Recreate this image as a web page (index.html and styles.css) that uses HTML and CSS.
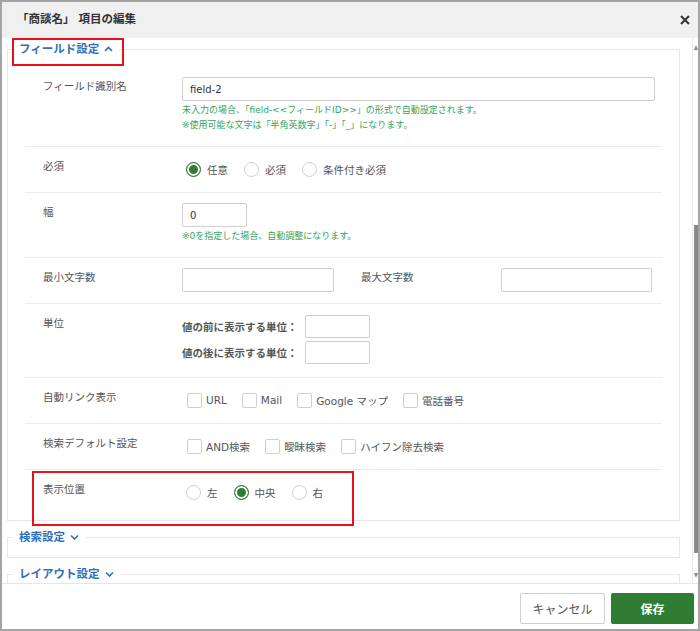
FILE: index.html
```html
<!DOCTYPE html>
<html lang="ja">
<head>
    <meta charset="UTF-8">
    <meta name="viewport" content="width=device-width, initial-scale=1.0">
    <title>項目の編集</title>
    <link rel="stylesheet" href="styles.css">
</head>
<body>
    <div class="dialog">
        <div class="dialog-header">
            <span class="dialog-title">「商談名」 項目の編集</span>
            <button class="close" type="button">
                <svg width="10" height="10" viewBox="0 0 10 10"><path d="M1 1 L9 9 M9 1 L1 9" stroke="#333" stroke-width="2" fill="none"/></svg>
            </button>
        </div>

        <div class="dialog-body">
            <div class="body-scroll">
                <fieldset class="section">
                    <legend class="section-title annot">フィールド設定<svg class="chev" width="9" height="6" viewBox="0 0 9 6"><polyline points="1,5 4.5,1.5 8,5" fill="none" stroke="#2f6fba" stroke-width="1.6"/></svg></legend>

                    <div class="row">
                        <div class="row-label">フィールド識別名</div>
                        <div class="row-control">
                            <input class="text-input input-id" type="text" value="field-2">
                            <div class="hints">
                                <p class="hint">未入力の場合、「field-&lt;&lt;フィールドID&gt;&gt;」の形式で自動設定されます。</p>
                                <p class="hint">※使用可能な文字は「半角英数字」「-」「_」になります。</p>
                            </div>
                        </div>
                    </div>

                    <div class="row">
                        <div class="row-label">必須</div>
                        <div class="row-control">
                            <div class="choices radios">
                                <label class="choice"><span class="radio checked"></span>任意</label>
                                <label class="choice"><span class="radio"></span>必須</label>
                                <label class="choice"><span class="radio"></span>条件付き必須</label>
                            </div>
                        </div>
                    </div>

                    <div class="row">
                        <div class="row-label">幅</div>
                        <div class="row-control">
                            <input class="text-input input-width" type="text" value="0">
                            <div class="hints">
                                <p class="hint">※0を指定した場合、自動調整になります。</p>
                            </div>
                        </div>
                    </div>

                    <div class="row">
                        <div class="row-label">最小文字数</div>
                        <div class="row-control inline">
                            <input class="text-input input-len" type="text">
                            <span class="inline-label">最大文字数</span>
                            <input class="text-input input-len2" type="text">
                        </div>
                    </div>

                    <div class="row">
                        <div class="row-label">単位</div>
                        <div class="row-control units">
                            <div class="unit">
                                <span class="unit-label">値の前に表示する単位：</span>
                                <input class="text-input input-unit" type="text">
                            </div>
                            <div class="unit">
                                <span class="unit-label">値の後に表示する単位：</span>
                                <input class="text-input input-unit" type="text">
                            </div>
                        </div>
                    </div>

                    <div class="row">
                        <div class="row-label">自動リンク表示</div>
                        <div class="row-control">
                            <div class="choices checks">
                                <label class="choice"><span class="check"></span>URL</label>
                                <label class="choice"><span class="check"></span>Mail</label>
                                <label class="choice"><span class="check"></span>Google マップ</label>
                                <label class="choice"><span class="check"></span>電話番号</label>
                            </div>
                        </div>
                    </div>

                    <div class="row">
                        <div class="row-label">検索デフォルト設定</div>
                        <div class="row-control">
                            <div class="choices checks">
                                <label class="choice"><span class="check"></span>AND検索</label>
                                <label class="choice"><span class="check"></span>曖昧検索</label>
                                <label class="choice"><span class="check"></span>ハイフン除去検索</label>
                            </div>
                        </div>
                    </div>

                    <div class="row annot-row">
                        <div class="row-label">表示位置</div>
                        <div class="row-control">
                            <div class="choices radios">
                                <label class="choice"><span class="radio"></span>左</label>
                                <label class="choice"><span class="radio checked"></span>中央</label>
                                <label class="choice"><span class="radio"></span>右</label>
                            </div>
                        </div>
                    </div>
                </fieldset>

                <fieldset class="section empty">
                    <legend class="section-title">検索設定<svg class="chev" width="9" height="6" viewBox="0 0 9 6"><polyline points="1,1.5 4.5,5 8,1.5" fill="none" stroke="#2f6fba" stroke-width="1.6"/></svg></legend>
                </fieldset>

                <fieldset class="section empty">
                    <legend class="section-title">レイアウト設定<svg class="chev" width="9" height="6" viewBox="0 0 9 6"><polyline points="1,1.5 4.5,5 8,1.5" fill="none" stroke="#2f6fba" stroke-width="1.6"/></svg></legend>
                </fieldset>
            </div>

            <div class="scrollbar">
                <span class="arrow-up"></span>
                <span class="thumb"></span>
                <span class="arrow-down"></span>
            </div>
        </div>

        <div class="dialog-footer">
            <button class="btn btn-cancel" type="button">キャンセル</button>
            <button class="btn btn-save" type="button">保存</button>
        </div>
    </div>
</body>
</html>
```

FILE: styles.css
```css
* {
    box-sizing: border-box;
}
body {
    margin: 0;
    font-family: "DejaVu Sans", "Noto Sans CJK JP", sans-serif;
    color: #555;
    background-color: white;
}
.dialog {
    width: 700px;
    height: 631px;
    border: 2px solid #a4a4a4;
    display: flex;
    flex-direction: column;
    background-color: #fff;
}
.dialog-header {
    height: 36px;
    flex-shrink: 0;
    background-color: #f0f0f0;
    display: flex;
    align-items: center;
    justify-content: space-between;
    padding: 0 8px 0 15px;
}
.dialog-title {
    font-size: 11.5px;
    font-weight: bold;
    color: #333;
    line-height: 16px;
    margin-top: -2px;
}
.close {
    border: none;
    background: none;
    padding: 0;
    display: flex;
}
.dialog-body {
    flex: 1;
    display: flex;
    min-height: 0;
}
.body-scroll {
    flex: 1;
    overflow: hidden;
    padding: 1px 12px 0 5px;
}

/* scrollbar */
.scrollbar {
    width: 6px;
    border-left: 1px solid #e8e8e8;
    display: flex;
    flex-direction: column;
    align-items: flex-end;
    padding: 7px 0 5px;
}
.arrow-up {
    width: 0;
    height: 0;
    border-left: 2.5px solid transparent;
    border-right: 2.5px solid transparent;
    border-bottom: 5px solid #8a8a8a;
}
.thumb {
    width: 4px;
    height: 328px;
    margin-top: 175px;
    background-color: #8a8a8a;
}
.arrow-down {
    margin-top: auto;
    width: 0;
    height: 0;
    border-left: 2.5px solid transparent;
    border-right: 2.5px solid transparent;
    border-top: 5px solid #8a8a8a;
}

/* sections */
.section {
    border: 1px solid #e8e8e8;
    margin: 0 0 6px;
    padding: 7px 17px 5px;
    min-width: 0;
}
.section.empty {
    padding: 0 17px 10px;
}
.section-title {
    margin-left: -12px;
    padding: 0 6px;
    font-size: 11.5px;
    font-weight: bold;
    color: #2f6fba;
    line-height: 20px;
}
.chev {
    margin-left: 5px;
    vertical-align: 1px;
}
.annot {
    position: relative;
}
.annot::after {
    content: "";
    position: absolute;
    left: -1px;
    right: -5px;
    top: -1px;
    bottom: -7px;
    border: 2px solid #e8101a;
}

/* rows */
.row {
    display: grid;
    grid-template-columns: 157px 1fr;
    padding: 10px 0 11px;
}
.row + .row {
    border-top: 1px solid #ececec;
}
.row:first-of-type {
    padding-top: 11px;
}
.row-label {
    padding-left: 18px;
    font-size: 10.5px;
    line-height: 18px;
    color: #555;
}
.annot-row {
    position: relative;
}
.annot-row::after {
    content: "";
    position: absolute;
    left: 7px;
    top: 1px;
    width: 318px;
    height: 51px;
    border: 2px solid #e8101a;
}
.row-control.inline {
    display: flex;
    align-items: center;
}
.inline-label {
    font-size: 10.5px;
    margin-left: 27px;
    width: 140px;
    line-height: 18px;
    align-self: flex-start;
}
.text-input {
    height: 24px;
    border: 1px solid #cfcfcf;
    border-radius: 2px;
    padding: 0 7px;
    font-family: inherit;
    font-size: 10px;
    color: #333;
    background-color: #fff;
    outline: none;
    display: block;
}
.input-id {
    width: 473px;
}
.input-width {
    width: 65px;
}
.input-len {
    width: 152px;
}
.input-len2 {
    width: 151px;
}
.input-unit {
    width: 65px;
    height: 23px;
}
.hints {
    margin: 2px 0 2px;
}
.hint {
    margin: 0;
    font-size: 9px;
    line-height: 15px;
    color: #35a35c;
}
.units {
    display: flex;
    flex-direction: column;
    gap: 3px;
    padding: 1px 0 2px;
}
.unit {
    display: flex;
    align-items: center;
}
.unit-label {
    width: 123px;
    font-size: 10.5px;
    font-weight: bold;
    color: #555;
}

/* radios and checks */
.choices {
    display: flex;
    align-items: center;
    height: 24px;
    gap: 16px;
    padding-left: 4px;
    font-size: 10.5px;
    color: #555;
}
.checks {
    padding-left: 5px;
    gap: 15px;
}
.choice {
    display: flex;
    align-items: center;
    gap: 6px;
}
.checks .choice {
    gap: 4px;
}
.radio {
    width: 15px;
    height: 15px;
    border: 1px solid #cfcfcf;
    border-radius: 50%;
    background-color: #fff;
}
.radio.checked {
    border-color: #2e7d32;
    background-color: #2e7d32;
    box-shadow: inset 0 0 0 2px #fff;
}
.check {
    width: 15px;
    height: 15px;
    border: 1px solid #cfcfcf;
    border-radius: 2px;
    background-color: #fff;
}

/* footer */
.dialog-footer {
    height: 46px;
    flex-shrink: 0;
    border-top: 1px solid #e6e6e6;
    display: flex;
    justify-content: flex-end;
    align-items: flex-start;
    gap: 6px;
    padding: 9px 4px 0;
}
.btn {
    height: 31px;
    font-family: inherit;
    font-size: 12px;
    border-radius: 2px;
    cursor: pointer;
}
.btn-cancel {
    width: 85px;
    background-color: #fff;
    border: 1px solid #cfcfcf;
    color: #555;
}
.btn-save {
    width: 83px;
    background-color: #2e7d32;
    border: none;
    color: #fff;
    font-weight: bold;
}
```
